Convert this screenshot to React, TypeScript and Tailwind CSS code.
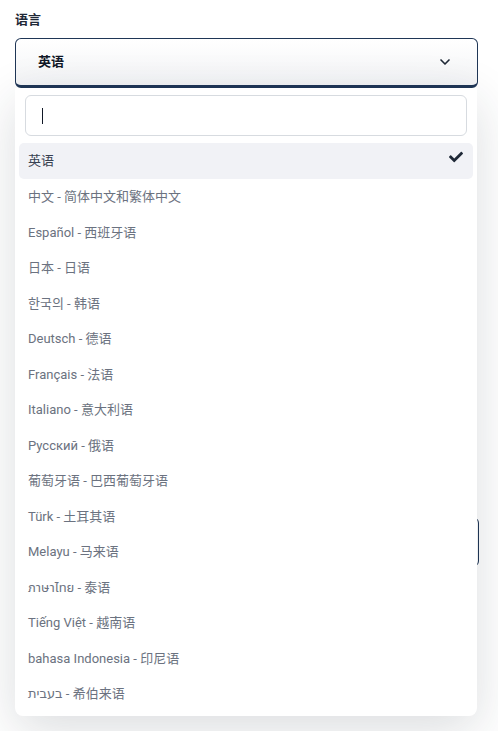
import React from 'react';
import { ChevronDown } from 'lucide-react';
import { FaCheck } from 'react-icons/fa';

const languages = [
    '中文 - 简体中文和繁体中文',
    'Español - 西班牙语',
    '日本 - 日语',
    '한국의 - 韩语',
    'Deutsch - 德语',
    'Français - 法语',
    'Italiano - 意大利语',
    'Русский - 俄语',
    '葡萄牙语 - 巴西葡萄牙语',
    'Türk - 土耳其语',
    'Melayu - 马来语',
    'ภาษาไทย - 泰语',
    'Tiếng Việt - 越南语',
    'bahasa Indonesia - 印尼语',
    'בעבית - 希伯来语',
];

export default function App() {
    return (
        <div
            className="relative min-h-[731px] bg-white px-[15px] pt-[10px]"
            style={{ fontFamily: 'Roboto, "Noto Sans CJK SC", "Noto Sans Thai", "DejaVu Sans", sans-serif' }}
        >
            <label className="block text-[13px] font-bold text-[#1f2937] leading-[20px]">语言</label>

            <div className="relative mt-[8px]">
                <button className="flex h-[50px] w-[463px] items-center justify-between rounded-[6px] border border-b-[3px] border-[#1f3656] bg-gradient-to-b from-white to-[#f3f4f6] pl-[22px] pr-[24px] text-left">
                    <span className="text-[13px] font-bold text-[#111827]">英语</span>
                    <ChevronDown size={16} strokeWidth={2.5} className="text-[#1f2937]" />
                </button>

                {/* form content underneath the open menu */}
                <div className="mt-[429px] h-[50px] w-[464px] rounded-[6px] border border-[#1f3656] bg-white" />

                <div className="absolute left-0 top-[50px] z-10 w-[462px] rounded-b-[8px] bg-white px-[4px] pb-[4px] pt-[7px] shadow-[0_14px_50px_rgba(30,41,59,0.16)]">
                    <div className="mx-[6px] flex h-[41px] items-center rounded-[6px] border border-[#d7dbe0] bg-white pl-[16px]">
                        <span className="h-[16px] w-[1px] bg-[#111827]" />
                    </div>
                    <ul className="mt-[7px]">
                        <li className="flex h-[36px] items-center justify-between rounded-[5px] bg-[#f1f2f6] pl-[9px] pr-[10px] text-[13px] text-[#374151]">
                            <span>英语</span>
                            <FaCheck size={14} className="mb-[8px] text-[#1f2937]" />
                        </li>
                        {languages.map((lang) => (
                            <li
                                key={lang}
                                className="flex h-[35.5px] items-center pl-[9px] text-[13px] text-[#6b7280]"
                            >
                                {lang}
                            </li>
                        ))}
                    </ul>
                </div>
            </div>
        </div>
    );
}
